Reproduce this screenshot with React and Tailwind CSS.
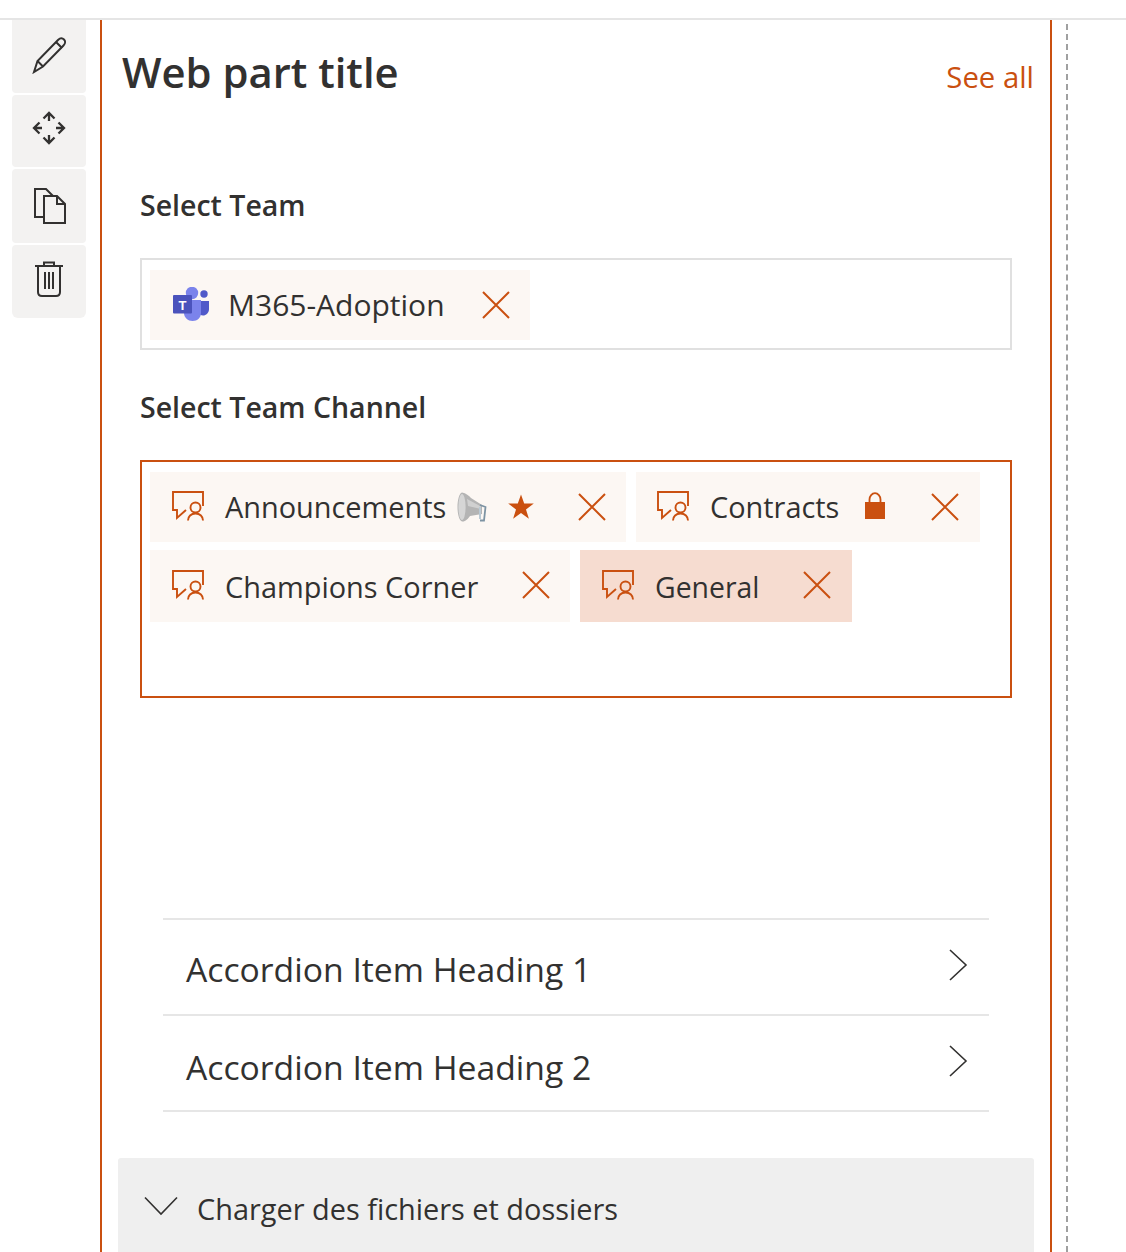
import React from "react";

const ORANGE = "#ca5010";

// thin X used on every chip
const CloseIcon = () => (
  <svg width="30" height="30" viewBox="0 0 30 30" fill="none" stroke={ORANGE} strokeWidth="2" className="shrink-0">
    <path d="M2 2 L28 28 M28 2 L2 28" />
  </svg>
);

const ChannelIcon = () => (
  <svg width="32" height="30" viewBox="0 0 32 30" fill="none" stroke={ORANGE} strokeWidth="1.9" className="shrink-0 -mt-[2px]">
    <path d="M14 19 L5 27 V19 H1 V1 H31 V15" />
    <circle cx="23.5" cy="16.5" r="5" />
    <path d="M16 29.5 C16 25.5 19 22.5 23.5 22.5 C28 22.5 31 25.5 31 29.5" />
  </svg>
);

const TeamsIcon = () => (
  <svg width="38" height="36" viewBox="0 0 38 36" className="shrink-0 -mt-[1px]">
    <circle cx="32" cy="7" r="3.7" fill="#5059c9" />
    <path d="M27 14 H37 V22 C37 26 34 28.5 31 28.5 C29 28.5 27 27.5 26 26 Z" fill="#5059c9" />
    <circle cx="20" cy="6" r="6.2" fill="#7b83eb" />
    <path d="M12 13 H29 V26 C29 30.5 25.5 34 20.5 34 C16 34 12 30.5 12 26 Z" fill="#7b83eb" />
    <rect x="1" y="8" width="19" height="18.5" rx="1" fill="#4b53bc" />
    <text x="10.5" y="22.5" textAnchor="middle" fontSize="13" fontWeight="700" fill="#fff" fontFamily="Liberation Sans, sans-serif">T</text>
  </svg>
);

const Megaphone = () => (
  <svg width="30" height="30" viewBox="0 0 30 30" className="shrink-0">
    <path d="M5 0.5 C9 1 12 4 14 6 L25 13 V22 L13 24 C11 27 8 30 5 29.5 C1.5 28 0.5 20 0.5 15 C0.5 9 2 1 5 0.5 Z" fill="#b4b4b4" />
    <ellipse cx="5" cy="15" rx="3.6" ry="13" fill="#d6d6d6" />
    <path d="M10 7 L24 14.5 V17 L11 14 Z" fill="#d0d0d0" />
    <path d="M23 13 L28.5 15 L27 28.5 H23" fill="none" stroke="#7d93a3" strokeWidth="1.8" />
    <path d="M23 15 V27" stroke="#b9c9d4" strokeWidth="2" />
  </svg>
);

const StarIcon = () => (
  <svg width="26" height="26" viewBox="0 0 26 26" className="shrink-0">
    <path d="M13 0.5 L16.2 9.6 H25.8 L18 15.4 L20.9 24.8 L13 19 L5.1 24.8 L8 15.4 L0.2 9.6 H9.8 Z" fill={ORANGE} />
  </svg>
);

const LockIcon = () => (
  <svg width="20" height="27" viewBox="0 0 20 27" className="shrink-0">
    <path d="M4.5 12 V7.5 C4.5 4 7 1.2 10 1.2 C13 1.2 15.5 4 15.5 7.5 V12" fill="none" stroke={ORANGE} strokeWidth="1.8" />
    <rect x="0" y="10" width="20" height="17" fill={ORANGE} />
  </svg>
);

const PencilIcon = () => (
  <svg width="36" height="38" viewBox="0 0 36 38" fill="none" stroke="#323130" strokeWidth="2">
    <path d="M3 36 L6.5 25 L27 4 C29 2 31.5 2 33 3.5 C34.5 5 34.5 7.5 32.5 9.5 L12 30.5 Z" />
    <path d="M6.5 25 L12 30.5 M25 6 L31 12" />
  </svg>
);

const MoveIcon = () => (
  <svg width="34" height="34" viewBox="0 0 34 34" fill="none" stroke="#323130" strokeWidth="2.3" className="-mt-[6px]">
    <path d="M17 2 V10 M11.5 7.5 L17 2 L22.5 7.5" />
    <path d="M17 24 V32 M11.5 26.5 L17 32 L22.5 26.5" />
    <path d="M2 17 H10 M7.5 11.5 L2 17 L7.5 22.5" />
    <path d="M24 17 H32 M26.5 11.5 L32 17 L26.5 22.5" />
  </svg>
);

const CopyIcon = () => (
  <svg width="33" height="36" viewBox="0 0 33 36" fill="none" stroke="#323130" strokeWidth="2">
    <path d="M11 29 H2 V1 H13 L20 8" />
    <path d="M11 8 H24 L32 16 V35 H11 Z" />
    <path d="M24 8 V16 H32" />
  </svg>
);

const TrashIcon = () => (
  <svg width="30" height="36" viewBox="0 0 30 36" fill="none" stroke="#323130" strokeWidth="2">
    <path d="M1 5 H29 M10 5 V1.5 H20 V5" />
    <path d="M4 5 V31 C4 33.5 5.5 35 8 35 H22 C24.5 35 26 33.5 26 31 V5" />
    <path d="M11 11 V28 M15 11 V28 M19 11 V28" />
  </svg>
);

const ChevronRightThin = () => (
  <svg width="20" height="32" viewBox="0 0 20 32" fill="none" stroke="#323130" strokeWidth="1.6">
    <path d="M2 1 L18 16 L2 31" />
  </svg>
);

const ChevronDownThin = () => (
  <svg width="34" height="20" viewBox="0 0 34 20" fill="none" stroke="#323130" strokeWidth="1.6" className="shrink-0">
    <path d="M1 1.5 L17 18 L33 1.5" />
  </svg>
);

const Tool = ({ className, children }) => (
  <div className={`bg-[#f3f2f1] flex justify-center items-center ${className}`}>{children}</div>
);

const Chip = ({ icon, label, extra, className, height, textSize, textGap, closeGap, selected }) => (
  <div className={`flex items-center ${height} ${selected ? "bg-[#f6dcd0]" : "bg-[#fcf7f3]"} ${className}`}>
    {icon}
    <span className={`${textGap} ${textSize} leading-none text-[#323130] whitespace-nowrap`}>{label}</span>
    {extra}
    <span className={closeGap}>
      <CloseIcon />
    </span>
  </div>
);

const AccordionRow = ({ title, textPad }) => (
  <div className="h-[96px] border-b-2 border-[#e6e6e6] flex items-center justify-between pl-[23px] pr-[21px]">
    <span className={`text-[33.7px] leading-none text-[#323130] ${textPad}`}>{title}</span>
    <span className="mb-[5px]">
      <ChevronRightThin />
    </span>
  </div>
);

export default function App() {
  return (
    <div className="h-[1252px] overflow-hidden bg-white font-['Open_Sans','Noto_Sans',sans-serif] flex flex-col">
      <div className="h-[20px] shrink-0 border-b-2 border-[#e5e5e5]" />
      <div className="flex flex-1 min-h-0">
        {/* TOOLBAR */}
        <div className="ml-[12px] w-[74px] shrink-0 flex flex-col gap-[2px]">
          <Tool className="h-[73px] rounded-b-[4px] pb-[4px]"><PencilIcon /></Tool>
          <Tool className="h-[72px] rounded-[4px]"><MoveIcon /></Tool>
          <Tool className="h-[74px] rounded-[4px]"><CopyIcon /></Tool>
          <Tool className="h-[73px] rounded-b-[6px] rounded-t-[4px] pb-[6px]"><TrashIcon /></Tool>
        </div>

        {/* WEB PART */}
        <div className="ml-[14px] w-[952px] shrink-0 border-x-2 border-[#ca5010] px-[16px]">
          <div className="flex justify-between items-baseline pl-[4px] pt-[23px]">
            <h1 className="text-[41.8px] leading-[58px] font-semibold text-[#323130]">Web part title</h1>
            <a className="text-[29.3px] text-[#ca5010]">See all</a>
          </div>

          <div className="pl-[22px] pr-[22px]">
            <div className="mt-[86px] text-[28.5px] leading-[36px] font-semibold text-[#323130]">Select Team</div>
            <div className="mt-[35px] h-[92px] border-2 border-[#e0e0e0] pl-[8px] pt-[10px]">
              <Chip
                height="h-[70px]"
                className="w-[380px] pl-[22px]"
                icon={<TeamsIcon />}
                label="M365-Adoption"
                textSize="text-[30px]"
                textGap="ml-[18px]"
                closeGap="ml-[36px]"
              />
            </div>

            <div className="mt-[39px] text-[28.5px] leading-[36px] font-semibold text-[#323130]">Select Team Channel</div>
            <div className="mt-[35px] h-[238px] border-2 border-[#ca5010] pl-[8px] pt-[10px]">
              <div className="flex gap-[10px]">
                <Chip
                  height="h-[70px]"
                  className="w-[476px] pl-[22px]"
                  icon={<ChannelIcon />}
                  label="Announcements"
                  textSize="text-[28.9px]"
                  textGap="ml-[21px]"
                  closeGap="ml-[43px]"
                  extra={
                    <span className="flex items-center ml-[11px] gap-[21px]">
                      <Megaphone />
                      <StarIcon />
                    </span>
                  }
                />
                <Chip
                  height="h-[70px]"
                  className="w-[344px] pl-[21px]"
                  icon={<ChannelIcon />}
                  label="Contracts"
                  textSize="text-[28.9px]"
                  textGap="ml-[21px]"
                  closeGap="ml-[45px]"
                  extra={<span className="ml-[26px] -mt-[3px]"><LockIcon /></span>}
                />
              </div>
              <div className="flex gap-[10px] mt-[8px]">
                <Chip
                  height="h-[72px]"
                  className="w-[420px] pl-[22px]"
                  icon={<ChannelIcon />}
                  label="Champions Corner"
                  textSize="text-[28.9px] pt-[2px]"
                  textGap="ml-[21px]"
                  closeGap="ml-[43px] -mt-[2px]"
                />
                <Chip
                  height="h-[72px]"
                  className="w-[272px] pl-[22px]"
                  icon={<ChannelIcon />}
                  label="General"
                  textSize="text-[28.4px] pt-[2px]"
                  textGap="ml-[21px]"
                  closeGap="ml-[43px] -mt-[2px]"
                  selected
                />
              </div>
            </div>

            {/* ACCORDION */}
            <div className="mt-[220px] mx-[23px] border-t-2 border-[#e6e6e6]">
              <AccordionRow title="Accordion Item Heading 1" textPad="pt-[5px]" />
              <AccordionRow title="Accordion Item Heading 2" textPad="pt-[9px]" />
            </div>
          </div>

          <div className="mt-[46px] h-[120px] bg-[#efefef] rounded-t-[3px] flex items-start pt-[38px] pl-[26px]">
            <ChevronDownThin />
            <span className="ml-[19px] -mt-[5px] text-[28.9px] leading-[36px] text-[#323130]">Charger des fichiers et dossiers</span>
          </div>
        </div>

        <div className="ml-[14px] mt-[4px] w-0 border-l-2 border-dashed border-[#a0a0a0]" />
      </div>
    </div>
  );
}
